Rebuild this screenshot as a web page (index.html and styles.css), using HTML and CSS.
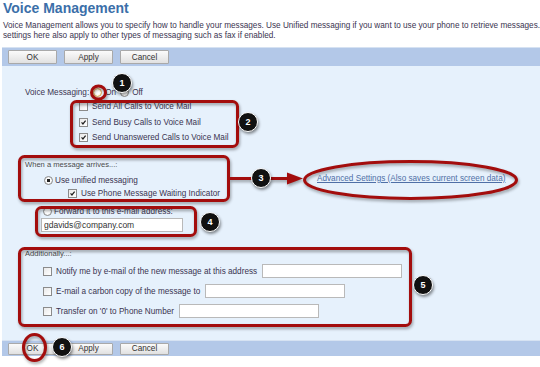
FILE: index.html
```html
<!DOCTYPE html>
<html lang="en">
<head>
  <meta charset="UTF-8">
  <meta name="viewport" content="width=device-width, initial-scale=1.0">
  <title>Voice Management</title>
  <link rel="stylesheet" href="styles.css">
</head>
<body>

<div class="page">
  <h1 class="title">Voice Management</h1>
  <p class="intro">Voice Management allows you to specify how to handle your messages. Use Unified messaging if you want to use your phone to retrieve messages.<br>settings here also apply to other types of messaging such as fax if enabled.</p>

  <div class="toolbar">
    <button class="btn">OK</button>
    <button class="btn">Apply</button>
    <button class="btn">Cancel</button>
  </div>

  <div class="panel">
    <div class="row voice">
      <span class="label">Voice Messaging:</span>
      <span class="radio hover"></span><span>On</span>
      <span class="radio off"></span><span>Off</span>
    </div>

    <div class="checks">
      <div class="row check-row"><span class="check"></span>Send All Calls to Voice Mail</div>
      <div class="row check-row"><span class="check"><svg viewBox="0 0 9 9"><path d="M2 4.3 L3.8 6.4 L7.2 2"/></svg></span>Send Busy Calls to Voice Mail</div>
      <div class="row check-row"><span class="check"><svg viewBox="0 0 9 9"><path d="M2 4.3 L3.8 6.4 L7.2 2"/></svg></span>Send Unanswered Calls to Voice Mail</div>
    </div>

    <div class="arrive">
      <div class="group">
        <div class="legend">When a message arrives...:</div>
        <div class="row unified"><span class="radio on"></span>Use unified messaging</div>
        <div class="row mwi"><span class="check"><svg viewBox="0 0 9 9"><path d="M2 4.3 L3.8 6.4 L7.2 2"/></svg></span>Use Phone Message Waiting Indicator</div>
      </div>
      <a class="advanced" href="#">Advanced Settings (Also saves current screen data)</a>
    </div>

    <div class="forward">
      <div class="row"><span class="radio"></span>Forward it to this e-mail address:</div>
      <input class="field email" type="text" value="gdavids@company.com">
    </div>

    <div class="extra">
      <div class="legend">Additionally...:</div>
      <div class="row opt-row"><span class="check"></span><span>Notify me by e-mail of the new message at this address</span><input class="field" type="text"></div>
      <div class="row opt-row"><span class="check"></span><span>E-mail a carbon copy of the message to</span><input class="field" type="text"></div>
      <div class="row opt-row"><span class="check"></span><span>Transfer on '0' to Phone Number</span><input class="field" type="text"></div>
    </div>
  </div>

  <div class="toolbar bottom">
    <button class="btn">OK</button>
    <button class="btn">Apply</button>
    <button class="btn">Cancel</button>
  </div>

  <!-- annotation layer -->
  <svg class="marks" width="540" height="367" viewBox="0 0 540 367">
    <g fill="none" stroke="#a30d0d" stroke-width="3">
      <ellipse cx="98.5" cy="92.5" rx="7" ry="6.5"/>
      <rect x="71.5" y="101.5" width="166" height="45" rx="5"/>
      <rect x="19.5" y="156.5" width="209" height="44" rx="5"/>
      <rect x="36.5" y="207.5" width="159" height="28" rx="5"/>
      <rect x="19.5" y="248.5" width="391" height="77" rx="5"/>
      <path d="M229 178.5 H252 M270 178.5 H290"/>
      <ellipse cx="410.5" cy="180" rx="106" ry="18.5"/>
      <ellipse cx="34.5" cy="347.5" rx="11" ry="13"/>
    </g>
    <path d="M287 172.5 L303 178.5 L287 184.5 Z" fill="#a30d0d"/>
  </svg>

  <span class="badge b1">1</span>
  <span class="badge b2">2</span>
  <span class="badge b3">3</span>
  <span class="badge b4">4</span>
  <span class="badge b5">5</span>
  <span class="badge b6">6</span>
</div>

</body>
</html>
```

FILE: styles.css
```css
body {
  margin: 0;
  background: #fff;
  font-family: "Liberation Sans", Arial, sans-serif;
  font-size: 8.2px;
  color: #3a3450;
}
.page {
  position: relative;
  width: 540px;
  height: 367px;
  overflow: hidden;
}
.title {
  margin: 0;
  padding-left: 3px;
  font-size: 14px;
  line-height: 17px;
  font-weight: bold;
  color: #3b6fa9;
}
.intro {
  margin: 4px 0 0;
  padding-left: 3px;
  line-height: 9.5px;
  white-space: nowrap;
}
.toolbar {
  margin: 7px 0 0 2px;
  height: 18px;
  padding-left: 6px;
  border-top: 1px solid #d6e2f2;
  background: #b3c8e8;
  display: flex;
  align-items: center;
  gap: 7px;
}
.toolbar.bottom {
  margin-top: 0;
  height: 15px;
}
.btn {
  width: 49px;
  height: 14px;
  padding: 0;
  border: 1px solid #a9a9a9;
  border-radius: 1px;
  background: linear-gradient(#fbfbfb, #e1e1e1);
  font: inherit;
  color: #333;
}
.toolbar.bottom .btn {
  height: 12px;
}
.panel {
  margin-left: 2px;
  height: 274px;
  box-sizing: border-box;
  padding: 19px 0 0 23px;
  background: #e6f1fc;
}
.row {
  display: flex;
  align-items: center;
  gap: 4px;
  white-space: nowrap;
}
.voice {
  height: 14px;
  gap: 3px;
}
.voice .label {
  margin-right: 1px;
}
.voice .off {
  margin-left: 1px;
}
.radio {
  width: 9px;
  height: 9px;
  box-sizing: border-box;
  border: 1px solid #8b8b8b;
  border-radius: 50%;
  background: radial-gradient(#fff 40%, #e4e4e4);
  flex: none;
}
.radio.on {
  background: radial-gradient(#222 30%, #fff 36%, #e4e4e4);
}
.radio.hover {
  border-color: #d7a14a;
  background: radial-gradient(#fff 35%, #f6e2b8);
}
.check {
  width: 9px;
  height: 9px;
  box-sizing: border-box;
  border: 1px solid #8b8b8b;
  background: linear-gradient(135deg, #e9e9e9, #fff);
  flex: none;
  display: flex;
}
.check svg {
  width: 7px;
  height: 7px;
  fill: none;
  stroke: #1e1e1e;
  stroke-width: 1.5;
}
.checks {
  padding-left: 54px;
}
.check-row {
  height: 15.5px;
}
.arrive {
  margin-top: 12.5px;
  display: flex;
  align-items: center;
}
.group {
  width: 292px;
}
.legend {
  height: 14px;
  line-height: 14px;
  font-size: 7.6px;
  color: #4a4a4a;
}
.unified {
  height: 16px;
  padding-left: 19px;
  gap: 2px;
}
.mwi {
  height: 10px;
  padding-left: 43px;
}
.advanced {
  color: #4f6fa6;
  text-decoration: underline;
}
.forward {
  margin-top: 6px;
}
.forward .row {
  height: 14px;
  padding-left: 18px;
  gap: 2px;
}
.field {
  width: 140px;
  height: 14px;
  box-sizing: border-box;
  padding: 0 2px;
  border: 1px solid #b9b9b9;
  background: #fff;
  font: 8.5px "Liberation Sans", Arial, sans-serif;
  color: #333;
  outline: none;
}
.email {
  display: block;
  width: 142px;
  margin-left: 16px;
}
.extra {
  margin-top: 15px;
}
.opt-row {
  height: 20px;
  padding-left: 18px;
}
.opt-row .field {
  margin-left: 1px;
}
.marks {
  position: absolute;
  top: 0;
  left: 0;
  pointer-events: none;
  filter: drop-shadow(1px 2px 1.5px rgba(0, 0, 0, 0.35));
}
.badge {
  position: absolute;
  width: 20px;
  height: 20px;
  box-sizing: border-box;
  border: 1.5px solid #fff;
  border-radius: 50%;
  background: #111;
  box-shadow: 1px 2px 3px rgba(0, 0, 0, 0.45);
  color: #fff;
  font: bold 9px "Liberation Sans", Arial, sans-serif;
  display: flex;
  align-items: center;
  justify-content: center;
}
.b1 { left: 112px; top: 73px; }
.b2 { left: 238px; top: 112px; }
.b3 { left: 251px; top: 168px; }
.b4 { left: 200px; top: 212px; }
.b5 { left: 413px; top: 275px; }
.b6 { left: 52px; top: 337px; }
```
